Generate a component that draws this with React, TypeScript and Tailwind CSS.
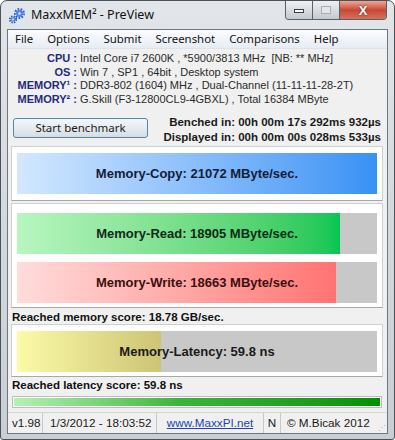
import React from "react";

function Gears() {
  return (
    <svg width="18" height="18" viewBox="0 0 18 18">
      <g>
        <circle cx="11.5" cy="6.5" r="4.2" fill="none" stroke="#2f63c8" strokeWidth="2.6" strokeDasharray="1.6 1.3" />
        <circle cx="11.5" cy="6.5" r="3.4" fill="#4f86e6" />
        <circle cx="11.5" cy="6.5" r="1.3" fill="#dfe3e8" />
        <circle cx="5" cy="12.5" r="3" fill="none" stroke="#2a57b8" strokeWidth="2.2" strokeDasharray="1.3 1.1" />
        <circle cx="5" cy="12.5" r="2.4" fill="#5a90ea" />
        <circle cx="5" cy="12.5" r="0.9" fill="#dfe3e8" />
      </g>
    </svg>
  );
}

function Bar({
  pct,
  label,
  grad,
  text,
}: {
  pct: number;
  label: string;
  grad: string;
  text: string;
}) {
  return (
    <div className="relative h-[41px] bg-[#c8c8c8]">
      <div className={`h-full ${grad}`} style={{ width: `${pct}%` }} />
      <div
        className={`absolute inset-0 flex items-center justify-center font-['Liberation_Sans',Arial,sans-serif] font-bold text-[13px] ${text}`}
      >
        {label}
      </div>
    </div>
  );
}

export default function App() {
  const menu = ["File", "Options", "Submit", "Screenshot", "Comparisons", "Help"];
  return (
    <div className="w-[395px] h-[440px] bg-white overflow-hidden">
      <div className="w-[395px] h-[440px] rounded-t-[7px] rounded-b-[3px] border border-[#4c525a] bg-gradient-to-b from-[#e2e5e9] via-[#d4d9de] to-[#c9ced4] flex flex-col px-[6px] pb-[5px]">
        {/* title bar */}
        <div className="h-[28px] flex items-start relative shrink-0">
          <div className="mt-[6px] ml-[1px]">
            <Gears />
          </div>
          <div className="ml-[5px] mt-[5px] text-[12.5px] text-[#111] font-['Noto_Sans',sans-serif] leading-[18px]">
            MaxxMEM² - PreView
          </div>
          <div className="absolute right-[1px] top-0 flex h-[19px] rounded-b-[4px] border border-t-0 border-[#58616b] overflow-hidden">
            <div className="w-[27px] h-full bg-gradient-to-b from-[#eef0f3] via-[#d9dde2] to-[#c3c9d0] border-r border-[#58616b] flex items-center justify-center">
              <div className="w-[10px] h-[4px] bg-white border border-[#3a4048] mt-[2px]" />
            </div>
            <div className="w-[27px] h-full bg-gradient-to-b from-[#eef0f3] via-[#d9dde2] to-[#c3c9d0] border-r border-[#58616b] flex items-center justify-center">
              <div className="w-[10px] h-[8px] border border-[#aab0b7] bg-[#e4e7ea]" />
            </div>
            <div className="w-[46px] h-full bg-gradient-to-b from-[#e9a898] via-[#c84733] to-[#d5705d] flex items-center justify-center">
              <span className="text-white font-bold text-[13px] leading-none font-['Liberation_Sans',Arial,sans-serif] [text-shadow:0_0_2px_#5a1a10]">
                X
              </span>
            </div>
          </div>
        </div>

        {/* client */}
        <div className="flex-1 border border-[#6f767e] bg-[#f0f0f0] flex flex-col">
          {/* menu */}
          <div className="h-[19px] shrink-0 flex items-center bg-gradient-to-b from-[#fbfcfe] to-[#e7ecf4] border-b border-[#dde3ec] font-['Noto_Sans',sans-serif] text-[11.4px] text-[#111]">
            {menu.map((m) => (
              <span key={m} className="px-[7px] leading-[18px]">
                {m}
              </span>
            ))}
          </div>

          {/* info */}
          <div className="pt-[3px] h-[57px] shrink-0 font-['Liberation_Sans',Arial,sans-serif] text-[11px] leading-[13.5px]">
            {[
              ["CPU :", "Intel Core i7 2600K , *5900/3813 MHz  [NB: ** MHz]"],
              ["OS :", "Win 7 , SP1 , 64bit , Desktop system"],
              ["MEMORY¹ :", "DDR3-802 (1604) MHz , Dual-Channel (11-11-11-28-2T)"],
              ["MEMORY² :", "G.Skill (F3-12800CL9-4GBXL) , Total 16384 MByte"],
            ].map(([l, v]) => (
              <div key={l} className="flex">
                <span className="w-[69px] text-right font-bold text-[#1f2a7e] whitespace-pre">{l}</span>
                <span className="pl-[3px] text-[#2a2a2a] whitespace-pre">{v}</span>
              </div>
            ))}
          </div>

          {/* button row */}
          <div className="mt-[9px] h-[30px] shrink-0 flex justify-between pl-[5px] pr-[6px]">
            <div className="mt-[3px] w-[135px] h-[20px] rounded-[3px] border border-[#4f86ab] bg-gradient-to-b from-[#f4f7f9] via-[#e6ebef] to-[#d6dde2] flex items-center justify-center font-['Noto_Sans',sans-serif] text-[11.5px] text-[#1a1a1a]">
              Start benchmark
            </div>
            <div className="text-right font-['Liberation_Sans',Arial,sans-serif] font-bold text-[11.5px] leading-[15px] text-[#1a1a1a]">
              <div>Benched in: 00h 00m 17s 292ms 932µs</div>
              <div>Displayed in: 00h 00m 00s 028ms 533µs</div>
            </div>
          </div>

          {/* panel 1 */}
          <div className="mt-[1px] ml-[3px] mr-[4px] h-[55px] shrink-0 bg-white border border-[#d0d0d0] border-b-[#a8a8a8] px-[5px] pt-[6px]">
            <Bar
              pct={100}
              label="Memory-Copy: 21072 MByte/sec."
              grad="bg-gradient-to-r from-[#d3e8fe] to-[#3791f4]"
              text="text-[#141c38]"
            />
          </div>

          {/* panel 2 */}
          <div className="mt-[2px] ml-[3px] mr-[4px] h-[105px] shrink-0 bg-white border border-[#d0d0d0] border-b-[#a8a8a8] px-[5px] pt-[9px] flex flex-col gap-[8px]">
            <Bar
              pct={89.7}
              label="Memory-Read: 18905 MByte/sec."
              grad="bg-gradient-to-r from-[#b8f6c0] to-[#00c653]"
              text="text-[#102a18]"
            />
            <Bar
              pct={88.6}
              label="Memory-Write: 18663 MByte/sec."
              grad="bg-gradient-to-r from-[#ffdcdc] to-[#ff7373]"
              text="text-[#3a1010]"
            />
          </div>

          <div className="mt-[2px] h-[14px] shrink-0 pl-[4px] font-['Liberation_Sans',Arial,sans-serif] font-bold text-[11.5px] leading-[14px] text-[#111]">
            Reached memory score: 18.78 GB/sec.
          </div>

          {/* panel 3 */}
          <div className="ml-[3px] mr-[4px] h-[53px] shrink-0 bg-white border border-[#d0d0d0] border-b-[#a8a8a8] px-[5px] pt-[6px]">
            <Bar
              pct={40}
              label="Memory-Latency: 59.8 ns"
              grad="bg-gradient-to-r from-[#fbfba8] to-[#cdc474]"
              text="text-[#1a1a1a]"
            />
          </div>

          <div className="mt-[1px] h-[14px] shrink-0 pl-[4px] font-['Liberation_Sans',Arial,sans-serif] font-bold text-[11.5px] leading-[14px] text-[#111]">
            Reached latency score: 59.8 ns
          </div>

          {/* progress */}
          <div className="mt-[4px] ml-[4px] mr-[5px] h-[12px] shrink-0 border border-[#bcbcbc] bg-white p-[1px]">
            <div className="h-full bg-gradient-to-r from-[#b4f2b4] via-[#3cb43c] via-45% to-[#009000]" />
          </div>

          {/* status bar */}
          <div className="mt-[4px] flex-1 flex items-stretch border-t border-[#d6d6d6] font-['Liberation_Sans',Arial,sans-serif] text-[11.7px] text-[#1a1a1a]">
            <div className="w-[35px] flex items-center pl-[4px] border-r border-[#c8c8c8]">v1.98</div>
            <div className="w-[114px] flex items-center pl-[7px] border-r border-[#c8c8c8]">1/3/2012 - 18:03:52</div>
            <div className="w-[107px] flex items-center justify-center border-r border-[#c8c8c8]">
              <span className="text-[#2345a8] underline">www.MaxxPI.net</span>
            </div>
            <div className="w-[17px] flex items-center justify-center border-r border-[#c8c8c8]">N</div>
            <div className="flex-1 flex items-center pl-[6px] relative">
              © M.Bicak 2012
              <span className="absolute right-[2px] bottom-[1px] text-[8px] leading-none text-[#a0a0a0] tracking-[-1px]">⋰</span>
            </div>
          </div>
        </div>
      </div>
    </div>
  );
}
